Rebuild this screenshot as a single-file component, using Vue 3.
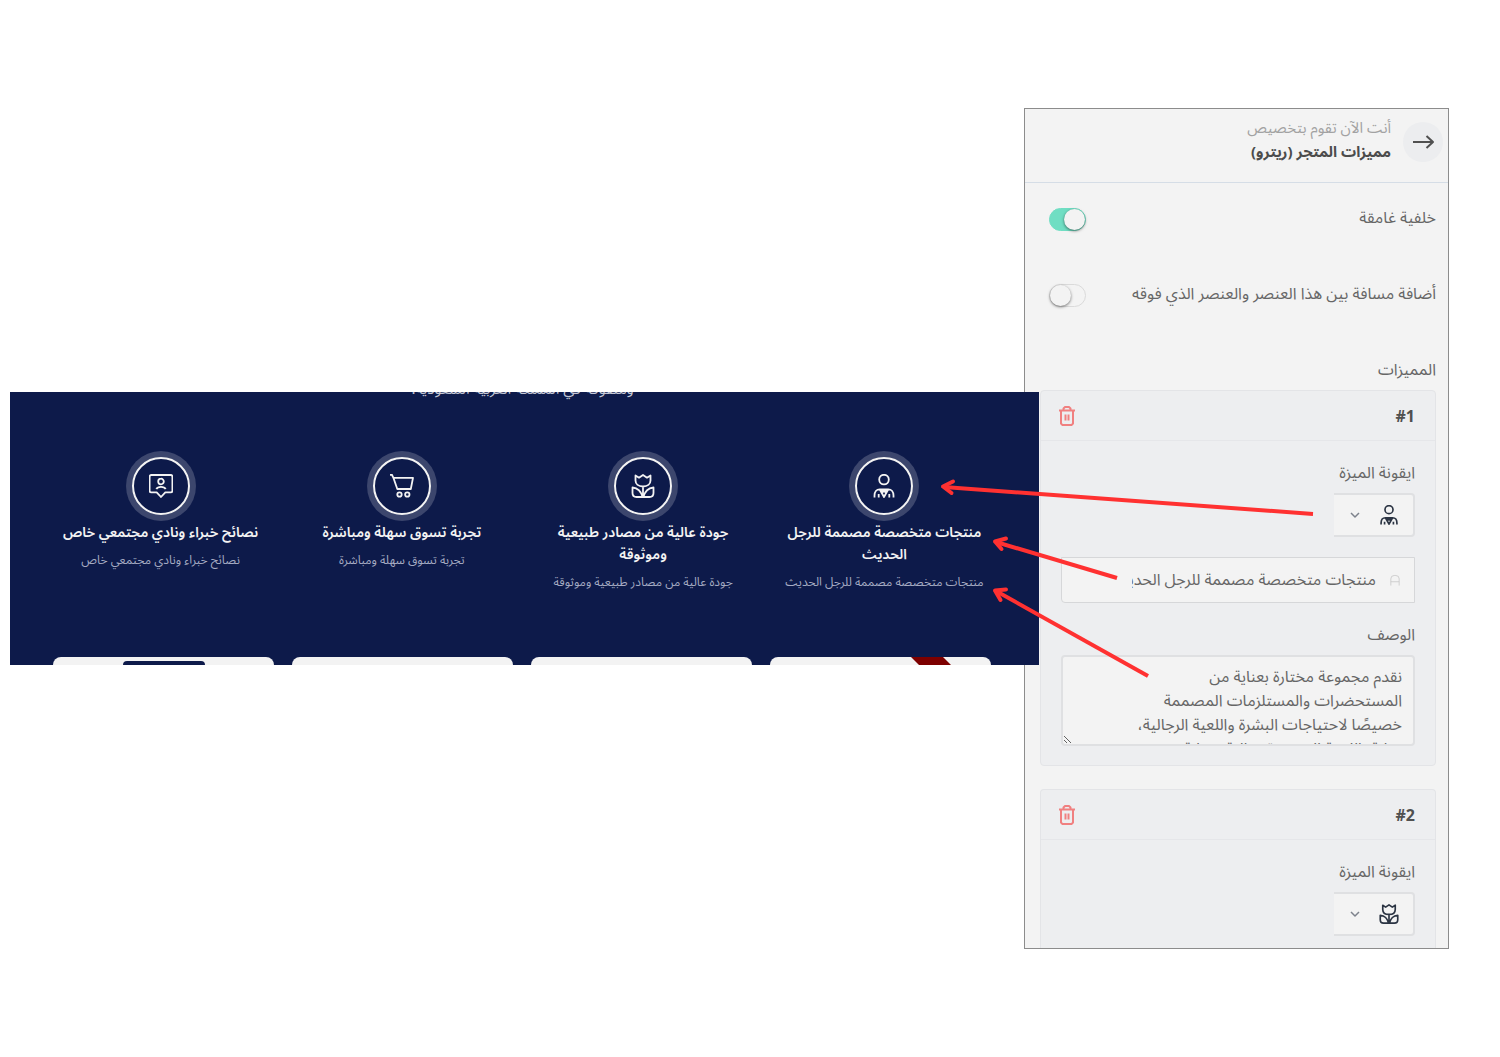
<script setup>
import { ref } from 'vue'

const icons = {
  person:
    'M12 .8a4.800 4.800 0 1 1 0 9.600a4.800 4.800 0 0 1 0-9.600M2.500 23.500v-2c0-3.600 2-6.200 5.200-6.200h8.600c3.200 0 5.200 2.600 5.200 6.200v2M6.700 20v3.500M17.300 20v3.500M7.700 15.300l4.300 7.700l4.300-7.700M9.800 15.800l2.200 1.500l2.200-1.500v2.800l-2.200-1.300l-2.200 1.300z',
  flower:
    'M4.500 1.500l3.500 2.200l4-2.700l4 2.700l3.500-2.200v5c0 3.700-3 6-7.500 6s-7.500-2.300-7.500-6zM12 12.500v10.500M1.500 13.500v5.500c0 2.700 1.300 4 4 4h13c2.700 0 4-1.300 4-4v-5.500c-5 .5-8.500 3.500-10 9.300h-1c-1.500-5.800-5-8.800-10-9.300z',
  cart:
    'M0 .8h2l1.400 3h19.600l-2.200 11.200h-13.500l-3.900-11.200M9.500 18.300a2.200 2.200 0 1 1 0 4.400a2.200 2.200 0 0 1 0-4.400M17.300 18.300a2.200 2.200 0 1 1 0 4.400a2.200 2.200 0 0 1 0-4.400',
  chat:
    'M2.300 1h19.400a1.700 1.700 0 0 1 1.700 1.700v14a1.700 1.700 0 0 1-1.700 1.700h-5.400l-4.300 4.600l-4.300-4.600h-5.400a1.700 1.700 0 0 1-1.700-1.700v-14a1.700 1.700 0 0 1 1.700-1.700M12 4.700a2.800 2.800 0 1 1 0 5.600a2.800 2.800 0 0 1 0-5.600M7.300 15c1.500-2.800 7.900-2.800 9.400 0',
}

const features = [
  { icon: 'person', title: 'منتجات متخصصة مصممة للرجل الحديث', text: 'منتجات متخصصة مصممة للرجل الحديث' },
  { icon: 'flower', title: 'جودة عالية من مصادر طبيعية وموثوقة', text: 'جودة عالية من مصادر طبيعية وموثوقة' },
  { icon: 'cart', title: 'تجربة تسوق سهلة ومباشرة', text: 'تجربة تسوق سهلة ومباشرة' },
  { icon: 'chat', title: 'نصائح خبراء ونادي مجتمعي خاص', text: 'نصائح خبراء ونادي مجتمعي خاص' },
]

const darkBackground = ref(true)
const topSpacing = ref(false)
const featureTitle = ref('منتجات متخصصة مصممة للرجل الحديث')
const featureText = ref(
  'نقدم مجموعة مختارة بعناية من\nالمستحضرات والمستلزمات المصممة\nخصيصًا لاحتياجات البشرة واللعية الرجالية،\nعناية باللحية المتعددة مثالية وعناية'
)
</script>

<template>
  <main class="stage">
    <section class="banner" dir="rtl">
      <p class="intro">ومتفوقة في المملكة العربية السعودية.</p>
      <ul class="features">
        <li v-for="f in features" :key="f.icon" class="feature">
          <span class="ring">
            <svg class="icon" viewBox="0 0 24 24" aria-hidden="true"><path :d="icons[f.icon]" /></svg>
          </span>
          <h3>{{ f.title }}</h3>
          <p>{{ f.text }}</p>
        </li>
      </ul>
      <div class="products">
        <div class="product"><svg class="ribbon" viewBox="0 0 40 8" aria-hidden="true"><path d="M0 0h32l8 8H8z" /></svg></div>
        <div class="product"></div>
        <div class="product"></div>
        <div class="product"><span class="badge"></span></div>
      </div>
    </section>

    <aside class="panel" dir="rtl">
      <header class="panel-head">
        <button class="back" type="button" aria-label="رجوع">
          <svg viewBox="0 0 24 24" aria-hidden="true"><path d="M2 12h20M15.500 6l6.500 6l-6.500 6" /></svg>
        </button>
        <div class="heading">
          <p class="hint">أنت الآن تقوم بتخصيص</p>
          <h2>مميزات المتجر (ريترو)</h2>
        </div>
      </header>

      <div class="panel-body">
        <div class="row">
          <label for="dark">خلفية غامقة</label>
          <input id="dark" v-model="darkBackground" class="switch" type="checkbox" />
        </div>
        <div class="row">
          <label for="space">أضافة مسافة بين هذا العنصر والعنصر الذي فوقه</label>
          <input id="space" v-model="topSpacing" class="switch" type="checkbox" />
        </div>
        <h4>المميزات</h4>

        <section class="card">
          <header class="card-head">
            <strong dir="ltr">#1</strong>
            <button class="trash" type="button" aria-label="حذف">
              <svg viewBox="0 0 18 20" aria-hidden="true"><path d="M1 4.500h16M5.500 4.500v-2l1.500-1.500h4l1.500 1.500v2M3 4.500v13l1.500 1.500h9l1.500-1.500v-13M7.500 8.500v6M10.500 8.500v6" /></svg>
            </button>
          </header>
          <div class="card-body">
            <span id="icon-1" class="label">ايقونة الميزة</span>
            <button class="picker" type="button" aria-haspopup="listbox" aria-labelledby="icon-1">
              <svg class="icon" viewBox="0 0 24 24" aria-hidden="true"><path :d="icons.person" /></svg>
              <svg class="chevron" viewBox="0 0 10 10" aria-hidden="true"><path d="M1 3l4 4l4-4" /></svg>
            </button>
            <div class="field">
              <svg viewBox="0 0 12 14" aria-hidden="true"><path d="M1 13v-8a4 4 0 0 1 4-4h2a4 4 0 0 1 4 4v8M1 8.500h10" /></svg>
              <input v-model="featureTitle" type="text" aria-label="عنوان الميزة" />
            </div>
            <label class="label" for="desc">الوصف</label>
            <textarea id="desc" v-model="featureText"></textarea>
          </div>
        </section>

        <section class="card card-last">
          <header class="card-head">
            <strong dir="ltr">#2</strong>
            <button class="trash" type="button" aria-label="حذف">
              <svg viewBox="0 0 18 20" aria-hidden="true"><path d="M1 4.500h16M5.500 4.500v-2l1.500-1.500h4l1.500 1.500v2M3 4.500v13l1.500 1.500h9l1.500-1.500v-13M7.500 8.500v6M10.500 8.500v6" /></svg>
            </button>
          </header>
          <div class="card-body">
            <span id="icon-2" class="label">ايقونة الميزة</span>
            <button class="picker" type="button" aria-haspopup="listbox" aria-labelledby="icon-2">
              <svg class="icon" viewBox="0 0 24 24" aria-hidden="true"><path :d="icons.flower" /></svg>
              <svg class="chevron" viewBox="0 0 10 10" aria-hidden="true"><path d="M1 3l4 4l4-4" /></svg>
            </button>
          </div>
        </section>
      </div>
    </aside>

    <svg class="arrows" viewBox="0 0 400 220" aria-hidden="true">
      <path d="M383 44L14 17" />
      <path class="tip" d="M23 11.500l-10 5l8.500 6.500" />
      <path d="M187 108L66 72" />
      <path class="tip" d="M76 68.500l-11 3l6.500 7.500" />
      <path d="M218 206L66 121" />
      <path class="tip" d="M76 119.500l-11 1l5.500 9.500" />
    </svg>
  </main>
</template>

<style>
body {
  margin: 0;
  background: #fff;
}
</style>

<style scoped>
* {
  box-sizing: border-box;
}
.stage {
  position: relative;
  display: grid;
  grid-template-columns: 1fr 15px 410px;
  align-items: start;
  padding: 108px 51px 108px 10px;
  font-family: 'Noto Sans', 'Noto Sans Arabic', sans-serif;
  font-size: 16px;
  line-height: 24px;
  color: #666;
}
p, h2, h3, h4, ul {
  margin: 0;
  padding: 0;
}
button, input, textarea {
  font: inherit;
  color: inherit;
}
svg {
  display: block;
  fill: none;
  stroke: currentColor;
  stroke-linejoin: round;
}
.icon {
  width: 24px;
  height: 24px;
  stroke-width: 1.8;
}

.banner {
  grid-area: 1 / 1 / 2 / 3;
  z-index: 1;
  margin-top: 284px;
  overflow: hidden;
  background: #0d1a4a;
  color: #f3f3f3;
}
.intro {
  margin: -16px 0 51px;
  padding-right: 4px;
  font-size: 15px;
  text-align: center;
  color: #c4c8d6;
}
.features {
  display: grid;
  grid-template-columns: repeat(4, 1fr);
  padding: 0 34px 0 30px;
  list-style: none;
  text-align: center;
}
.feature {
  padding: 0 12px;
}
.ring {
  display: flex;
  align-items: center;
  justify-content: center;
  width: 58px;
  height: 58px;
  margin: 6px auto;
  border: 2px solid #f3f3f3;
  border-radius: 50%;
  box-shadow: 0 0 0 6px #3c466d;
}
.feature h3 {
  font-size: 14px;
  line-height: 22px;
  font-weight: 600;
}
.feature p {
  margin-top: 6px;
  font-size: 12px;
  line-height: 22px;
  color: #a5abc2;
}
.products {
  display: grid;
  grid-template-columns: repeat(4, 1fr);
  gap: 18px;
  margin-top: 64px;
  padding: 0 48px 0 43px;
}
.product {
  display: flex;
  justify-content: center;
  height: 8px;
  border-radius: 10px 10px 0 0;
  background: #f3f3f3;
  overflow: hidden;
}
.ribbon {
  width: 40px;
  height: 8px;
  margin-right: -100px;
  fill: #7d0000;
  stroke: none;
}
.badge {
  width: 82px;
  height: 4px;
  margin-top: 4px;
  border-radius: 12px 12px 0 0;
  background: #0d1a4a;
}

.panel {
  grid-area: 1 / 2 / 2 / 4;
  border: 1px solid #8c8c8c;
  background: #f3f3f3;
}
.panel-head {
  display: flex;
  align-items: center;
  gap: 12px;
  height: 74px;
  padding: 0 5px 8px;
  border-bottom: 1px solid #d5dde6;
}
.back {
  display: flex;
  align-items: center;
  justify-content: center;
  width: 40px;
  height: 40px;
  padding: 0;
  border: 0;
  border-radius: 50%;
  background: #ecedef;
  color: #505050;
}
.back svg {
  width: 24px;
  height: 24px;
  stroke-width: 2;
}
.heading {
  padding-bottom: 6px;
}
.hint {
  font-size: 15px;
  color: #a2a2a2;
}
h2 {
  font-size: 15px;
  line-height: 24px;
  color: #4c4c4c;
}
.panel-body {
  padding: 0 12px 0 15px;
}
.row {
  display: flex;
  align-items: center;
  justify-content: space-between;
  height: 76px;
  padding: 0 0 4px 9px;
}
.row label {
  padding-bottom: 4px;
}
.switch {
  appearance: none;
  display: flex;
  width: 37px;
  height: 23px;
  margin: 0;
  border: 1px solid #dadada;
  border-radius: 12px;
  justify-content: flex-end;
}
.switch::before {
  content: '';
  width: 21px;
  height: 21px;
  border-radius: 50%;
  background: #f3f3f3;
  box-shadow: 0 1px 3px #0008;
}
.switch:checked {
  justify-content: flex-start;
  border-color: #70dec3;
  background: #70dec3;
}
h4 {
  height: 55px;
  padding-top: 22px;
  font-size: 16px;
  font-weight: 400;
}
.card {
  margin-bottom: 23px;
  border: 1px solid #e3e4e7;
  border-radius: 4px;
  background: #edeef0;
}
.card-last {
  margin-bottom: 0;
  border-bottom: 0;
  border-radius: 4px 4px 0 0;
}
.card-head {
  display: flex;
  align-items: center;
  justify-content: space-between;
  height: 50px;
  padding: 0 20px 0 17px;
  border-bottom: 1px solid #e5e6e9;
  color: #505050;
}
.trash {
  padding: 0;
  border: 0;
  background: none;
  color: #f08080;
}
.trash svg {
  width: 18px;
  height: 20px;
  stroke-width: 2;
}
.card-body {
  padding: 19px 20px 12px;
}
.label {
  display: block;
  height: 33px;
}
.picker {
  display: flex;
  align-items: center;
  gap: 19px;
  width: 81px;
  height: 44px;
  padding: 0 14px 0 0;
  border: 2px solid #dfe0e2;
  border-left: 0;
  border-radius: 0 4px 4px 0;
  background: #f3f3f3;
}
.picker .icon {
  width: 20px;
  height: 20px;
  flex: none;
  stroke-width: 2;
  color: #2b3443;
}
.chevron {
  width: 10px;
  height: 10px;
  flex: none;
  stroke-width: 1.5;
  color: #7d828c;
}
.field {
  display: flex;
  align-items: center;
  height: 46px;
  margin: 20px 0 19px;
  padding: 0 14px 0 70px;
  border: 1px solid #d6d7d9;
  border-radius: 0 0 0 4px;
  background: #f3f3f3;
}
.field svg {
  width: 10px;
  height: 13px;
  flex: none;
  color: #c8c8c8;
}
.field input {
  width: 100%;
  min-width: 0;
  height: 40px;
  margin-right: 14px;
  padding: 0;
  border: 0;
  outline: 0;
  background: none;
}
textarea {
  display: block;
  width: 100%;
  height: 91px;
  margin: 0 0 7px;
  padding: 7px 11px;
  border: 2px solid #dfe0e2;
  border-radius: 4px;
  background: #f3f3f3;
  overflow: hidden;
  white-space: pre;
}

.arrows {
  position: absolute;
  top: 470px;
  right: 170px;
  z-index: 2;
  width: 400px;
  height: 220px;
  stroke: #ff3131;
  stroke-width: 4;
  pointer-events: none;
}
.tip {
  stroke-linecap: round;
}
</style>
